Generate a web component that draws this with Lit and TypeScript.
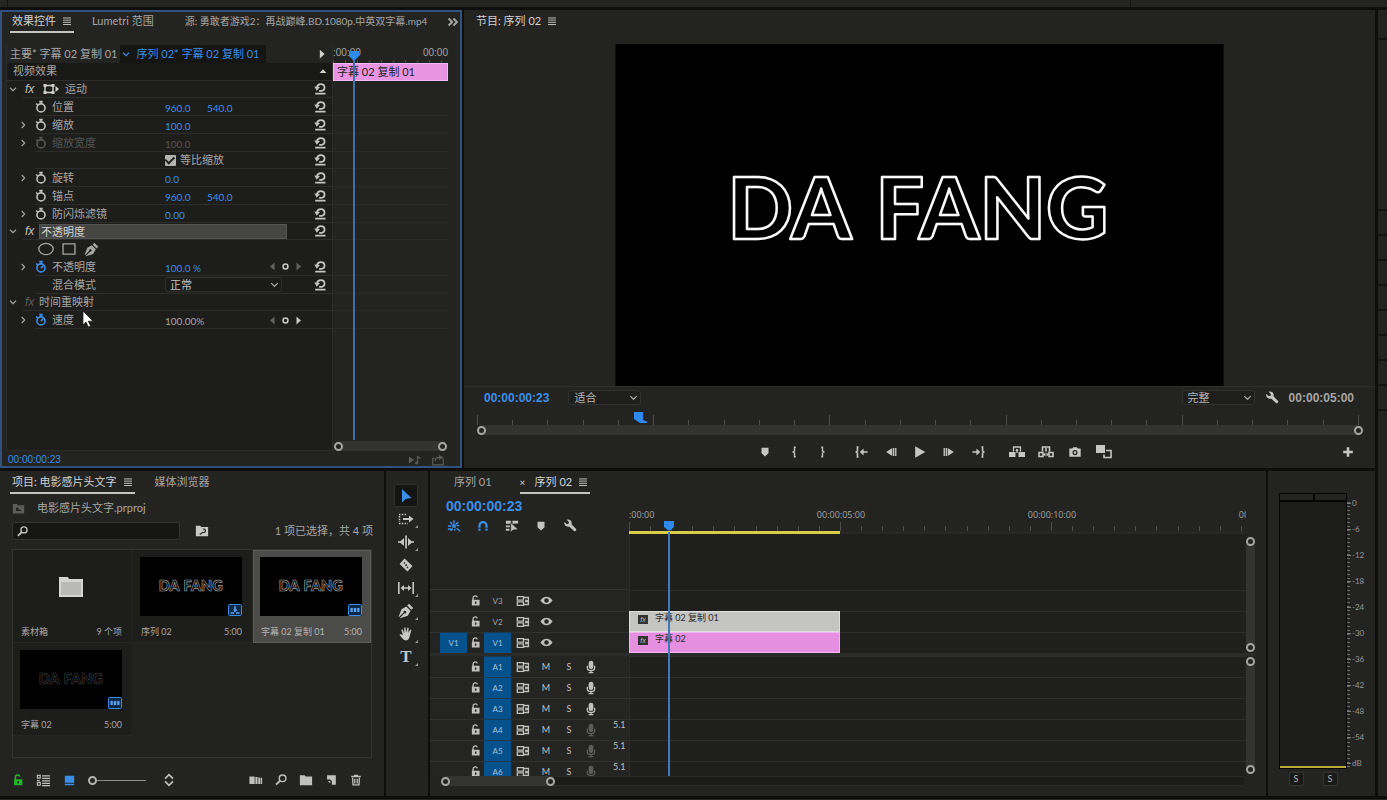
import { LitElement, html, svg, css, nothing } from "lit";
import { customElement, property } from "lit/decorators.js";
import { classMap } from "lit/directives/class-map.js";
import { styleMap } from "lit/directives/style-map.js";

const ICONS: Record<string, unknown> = {
  menu: svg`<path d="M3.500 4.500h9M3.500 7h9M3.500 9.500h9M3.500 12h9" fill="none" stroke="currentColor"/>`,
  more: svg`<path d="M3 4l4 4-4 4M8.500 4l4 4-4 4" fill="none" stroke="currentColor" stroke-width="2.200"/>`,
  down: svg`<path d="M4 6.300L8 10.200l4-3.900" fill="none" stroke="currentColor" stroke-width="1.500"/>`,
  right: svg`<path d="M6.300 4L10.200 8l-3.900 4" fill="none" stroke="currentColor" stroke-width="1.500"/>`,
  triRight: svg`<path d="M5.500 3v10l5.500-5z"/>`,
  triLeft: svg`<path d="M10.500 3v10L5 8z"/>`,
  triUp: svg`<path d="M3.500 10.500h9L8 5.500z"/>`,
  diamond: svg`<circle cx="8" cy="8" r="3" fill="none" stroke="currentColor" stroke-width="1.900"/>`,
  motion: svg`<path d="M2 4.500h8v7H2z" fill="none" stroke="currentColor" stroke-width="1.400"/><path d="M.5 3h3v3h-3zM8.500 3h3v3h-3zM.5 10h3v3h-3zM8.500 10h3v3h-3zM12.500 5v6L16 8z"/>`,
  watch: svg`<path d="M6 1.800h4M8 2v2.500M2.500 4l2 2" fill="none" stroke="currentColor" stroke-width="1.900"/><circle cx="8" cy="9" r="4.600" fill="none" stroke="currentColor" stroke-width="1.900"/>`,
  watchOn: svg`<path d="M6 1.800h4M8 2v2.500M2.500 4l2 2M8 9.300l2.500-2.800" fill="none" stroke="currentColor" stroke-width="1.900"/><circle cx="8" cy="9" r="4.600" fill="none" stroke="currentColor" stroke-width="1.900"/>`,
  reset: svg`<path d="M4.500 6C5 3.300 6.500 2.300 8.800 2.300c2.500 0 4.400 1.700 4.400 4.100 0 2.100-1.500 3.700-3.400 3.700H7M2.500 13.300h11.800" fill="none" stroke="currentColor" stroke-width="2"/><path d="M1.500 5.200l6.500.5-3.700 4.300z"/>`,
  ellipse: svg`<ellipse cx="8" cy="8" rx="7.200" ry="5.600" fill="none" stroke="currentColor" stroke-width="1.300"/>`,
  rect: svg`<path d="M1.200 2.200h13.600v11.600H1.200z" fill="none" stroke="currentColor" stroke-width="1.500"/>`,
  pen: svg`<path d="M11 .8l4.200 4.200-1.800 1.800-4.200-4.200zM8.300 3.400l4.300 4.300-2.800 5L2.300 15.300l-.4-.4 4.600-4.600a1.300 1.300 0 10-.9-.9L1 14l-.3-.4L3.500 6.200z"/>`,
  playNote: svg`<path d="M1 4v8l6-4z"/><path d="M11 3v8M11 3.500l3 3" fill="none" stroke="currentColor" stroke-width="1.300"/><circle cx="9.800" cy="11.500" r="1.700"/>`,
  exportIt: svg`<path d="M5 6H2v7.500h12V6M5 9.500C5 6 7 5 9.500 5" fill="none" stroke="currentColor" stroke-width="1.400"/><path d="M9 2l5 3-5 3z"/>`,
  wrench: svg`<path d="M1.600 3.500l2.900 2.500 1.900-.5.400-2L4.200.9C6.600 0 9.200 1.200 9.800 3.500c.2 1 .1 1.700-.1 2.400l5.200 5.400c1.100 1.200-1 3.500-2.300 2.400L7 8.500C4.300 9.500.5 7 1.600 3.500z"/>`,
  marker: svg`<path d="M4 3h8v6.500L8 13 4 9.500z"/>`,
  braceL: svg`<path d="M10 2.500H8.600v4.300L7 8l1.600 1.200v4.300H10" fill="none" stroke="currentColor" stroke-width="1.600"/>`,
  braceR: svg`<path d="M6 2.500h1.400v4.300L9 8 7.400 9.200v4.300H6" fill="none" stroke="currentColor" stroke-width="1.600"/>`,
  goIn: svg`<path d="M4 2.500H2.800v4.300L1.500 8l1.300 1.200v4.300H4M8 8h6.500" fill="none" stroke="currentColor" stroke-width="1.900"/><path d="M5.500 8L9.800 4v8z"/>`,
  goOut: svg`<path d="M12 2.500h1.200v4.300l1.300 1.200-1.300 1.200v4.300H12M1.500 8H8" fill="none" stroke="currentColor" stroke-width="1.900"/><path d="M10.500 8L6.200 4v8z"/>`,
  stepBack: svg`<path d="M9.500 3.500v9L2.500 8zM10.300 3.500h1.500v9h-1.500zM12.700 3.500h1.500v9h-1.500z"/>`,
  stepFwd: svg`<path d="M6.500 3.500v9l7-4.500zM4.200 3.500h1.500v9H4.200zM1.800 3.500h1.500v9H1.800z"/>`,
  play: svg`<path d="M2.500 1.500v13L14 8z"/>`,
  lift: svg`<path d="M0 8h6.500v5H0zM9.500 8H16v5H9.500z"/><path d="M4.500 7.500V3h7v4.500M8 5v4" fill="none" stroke="currentColor" stroke-width="1.300"/><path d="M6.300 7h3.400L8 4.500z"/>`,
  extract: svg`<path d="M1 8.500h4v4H1zM11 8.500h4v4h-4zM4.500 7.500V3h7v4.500M8 4v3.500" fill="none" stroke="currentColor" stroke-width="1.600"/><path d="M5 10.500L7.500 8.500v4zM11 10.500L8.500 8.500v4z"/>`,
  camera: svg`<path fill-rule="evenodd" d="M1.500 4h3.200L6 2.500h4L11.300 4h3.200v9.500h-13zM8 5.800a2.900 2.900 0 100 5.800 2.900 2.900 0 000-5.800zM8 7.200a1.500 1.500 0 110 3 1.500 1.500 0 010-3z"/>`,
  compare: svg`<path d="M0 1h9v8H0z"/><path d="M10 6.500h5v7H8V10.500" fill="none" stroke="currentColor" stroke-width="1.600"/>`,
  plus: svg`<path d="M6.700 3.200h2.600v3.500h3.500v2.600H9.300v3.500H6.700V9.300H3.200V6.700h3.500z"/>`,
  binUp: svg`<path fill-rule="evenodd" d="M1 2.500h5l1 1.500h8v10H1zM5 7v4h6V9.500H7.500L8.500 7z"/>`,
  search: svg`<circle cx="9.800" cy="6" r="3.800" fill="none" stroke="currentColor" stroke-width="1.600"/><path d="M7.200 8.600L2.300 13.300" stroke="currentColor" stroke-width="2.200"/>`,
  searchBin: svg`<path fill-rule="evenodd" d="M1 2h5l1 1.500h8v10.500H1z"/><path d="M9 6a2 2 0 110 3.500L5.500 12" fill="none" stroke="#232322" stroke-width="1.300"/>`,
  folder: svg`<path d="M1 2.500h5.500l1 1.500H15v10H1z"/>`,
  lock: svg`<path fill-rule="evenodd" d="M3.500 7h9.500v7H3.500zM7.300 9.300h1.800v2.800H7.300z"/><path d="M5 8V5.200c0-3.500 4.500-3.800 5.200-1" fill="none" stroke="currentColor" stroke-width="1.700"/>`,
  list: svg`<path d="M1.500 2.500h3v3h-3zM1.500 10h3v3h-3z" fill="none" stroke="currentColor" stroke-width="1.200"/><path d="M6.500 3H15M6.500 5.700H15M1 8h3M6.500 8.400H15M6.500 11H15M6.500 13.500H15" stroke="currentColor" stroke-width="1.200"/>`,
  thumbs: svg`<path d="M3 3h10v7.500H3zM3 11.500h10v1.500H3z"/>`,
  sort: svg`<path d="M3.500 6.500L8 2l4.500 4.500M3.500 9.500L8 14l4.500-4.500" fill="none" stroke="currentColor" stroke-width="1.900"/>`,
  automate: svg`<path d="M.5 4h6v8.500h-6zM7.300 4.500h2.400v8H7.300zM10.500 5h2v7.500h-2zM13.200 5.500h1.800v7h-1.800z"/>`,
  newItem: svg`<path d="M3.500 2.500h10v11H9V9.500L7 7.500H3.500z"/><path d="M4.500 9h2.700v3z"/>`,
  trash: svg`<path d="M4 5.500l.6 8h6.800l.6-8M2.500 4h11M6.500 4V2.700h3V4M6.600 6.500v5.500M9.400 6.500v5.500" fill="none" stroke="currentColor" stroke-width="1.500"/>`,
  arrow: svg`<path d="M4 1v13.500l3.600-3.500L13.500 10z"/>`,
  trackSel: svg`<path d="M1 3.500h8M1 12.500h9M1.500 5v6" fill="none" stroke="currentColor" stroke-width="1.500" stroke-dasharray="1.500 1.300"/><path d="M5 7h6V4.500L15.500 8 11 11.500V9H5z"/>`,
  ripple: svg`<path d="M7.200 1.500h1.700v13H7.200zM6 4v8L1.500 8zM10 4v8L14.500 8z"/><path d="M0 7.300h3v1.400H0zM13 7.300h3v1.400h-3z"/>`,
  razor: svg`<path fill-rule="evenodd" d="M6.500 1.500l8 7.500-5 5.500-8-7.500zM5.500 6l1 1 1-1-1-1zM8.500 10.500l1 1 1-1-1-1zM7 8.500l1 .9 1.300-1.400-1-.9z"/>`,
  slip: svg`<path d="M.8 2v12M15.200 2v12M4 8h8" fill="none" stroke="currentColor" stroke-width="1.600"/><path d="M2.500 8L6 5v6zM13.500 8L10 5v6z"/>`,
  hand: svg`<path d="M5 9L3.200 3.700 4.500 3.300 6.300 7 6.200 1.500H7.500L8.200 6.500 9.500 1.600l1.200.3L10.300 7l2-3.500 1.100.6-1.700 6c-.5 2.500-1.400 4.400-3.700 4.400-2.500 0-4-2.800-6.500-5.500.5-1.200 1.900-.9 3.500 0z"/>`,
  nest: svg`<path d="M1 8h4M8 1.500v3.500M11 7.500h3M9 11v2M3.500 3.500L6 6M13 3.500L10 6M4 13.500L6.500 11M11 10.500l4 3.500M1 11.500h4" fill="none" stroke="currentColor" stroke-width="1.700"/><path d="M6 6h4v4H6z"/>`,
  magnet: svg`<path d="M4 13.500V7.500a4 4 0 018 0v6" fill="none" stroke="currentColor" stroke-width="2.500"/><path d="M2.500 10.500h3.200M10.300 10.500h3.200" stroke="#232322"/>`,
  linked: svg`<path d="M1 2h6v3.500H1zM8.500 2H15v3L8.500 5.500zM1 7.500h4.500v2H1zM1 11h4v2.500H1z"/><path d="M6.500 4v11l2.800-2.500L15 12z" stroke="#232322" stroke-width=".7"/>`,
  sync: svg`<path d="M1.500 3h7v4h-7zM1.500 9h7v4h-7zM8.500 4h5.700v8H8.500" fill="none" stroke="currentColor" stroke-width="1.500"/><path d="M10.500 6.200l4 .8v2l-4 .8z"/>`,
  eye: svg`<path fill-rule="evenodd" d="M.5 8C3 4.300 5.500 3.400 8 3.400S13 4.300 15.500 8c-2.500 3.700-5 4.600-7.500 4.600S3 11.700.5 8zm7.500-2.800a2.800 2.800 0 100 5.600 2.800 2.800 0 000-5.600z"/>`,
  mic: svg`<rect x="5.300" y=".8" width="5.400" height="9.500" rx="2.700"/><path d="M3.800 6.500V9c0 1.600 1.600 3 4.200 3s4.200-1.400 4.200-3V6.500M8 12v2.500M5.300 14.500h5.400" fill="none" stroke="currentColor" stroke-width="1.500"/>`,
};

const base = css`
  * { box-sizing: border-box; }
  :host {
    display: block;
    min-width: 0;
    min-height: 0;
    color: #a6a6a4;
    font-family: Lato, "Noto Sans CJK SC", sans-serif;
    font-size: 11px;
    line-height: 16px;
    white-space: nowrap;
  }
  button, input, select { font: inherit; color: inherit; border: 0; margin: 0; padding: 0; background: none; border-radius: 0; }
  button { display: inline-flex; align-items: center; justify-content: center; }
  .panel { display: flex; flex-direction: column; height: 100%; background: #232322; overflow: hidden; }
  .tabs { display: flex; flex: none; height: 23px; padding-left: 10px; }
  .tab { display: flex; align-items: center; justify-content: flex-start; gap: 4px; height: 23px; padding: 0 0 0 2px; border-bottom: 2px solid transparent; }
  .tab.on { color: #d2d2d0; border-color: #c4c4c2; }
  .tab.on.plain { border-color: transparent; }
  .ring { width: 9px; height: 9px; border: 2px solid #a6a6a4; border-radius: 50%; background: #232322; flex: none; }
  .zoombar { display: flex; justify-content: space-between; align-items: center; height: 10px; background: #333332; border-radius: 5px; }
  .blue { color: #3b8ee6; }
`;

@customElement("pr-icon")
class PrIcon extends LitElement {
  @property() name = "menu";
  @property({ type: Number }) size = 14;
  static styles = css`
    :host { display: inline-flex; flex: none; }
    svg { display: block; fill: currentColor; }
  `;
  render() {
    return html`<svg width=${this.size} height=${this.size} viewBox="0 0 16 16" aria-hidden="true">${ICONS[this.name]}</svg>`;
  }
}

@customElement("title-frame")
class TitleFrame extends LitElement {
  @property({ type: Number }) stroke = 2.5;
  @property() ink = "#fafafa";
  static styles = css`
    :host { display: block; min-height: 0; }
    svg { display: block; width: 100%; height: 100%; }
    text { font-family: Lato, sans-serif; font-weight: 900; font-size: 86px; fill: #000; stroke-linejoin: round; }
  `;
  render() {
    return html`<svg viewBox="0 0 608 342" role="img" aria-label="DA FANG">
      <rect width="608" height="342" fill="#000"></rect>
      <text y="195" stroke=${this.ink} stroke-width=${this.stroke}><tspan x="112">DA</tspan><tspan x="260">FANG</tspan></text>
    </svg>`;
  }
}

interface EffectRow {
  level: number;
  label?: string;
  caret?: "down" | "right";
  fx?: "on" | "off";
  motion?: boolean;
  watch?: "on" | "off" | "dim";
  values?: string[];
  plain?: boolean;
  kind?: "check" | "shapes" | "mode";
  keys?: "none" | "next";
  reset?: boolean;
  selected?: boolean;
}

const EFFECTS: EffectRow[] = [
  { level: 0, label: "运动", caret: "down", fx: "on", motion: true, reset: true },
  { level: 1, label: "位置", watch: "off", values: ["960.0", "540.0"], reset: true },
  { level: 1, label: "缩放", caret: "right", watch: "off", values: ["100.0"], reset: true },
  { level: 1, label: "缩放宽度", caret: "right", watch: "dim", values: ["100.0"], reset: true },
  { level: 1, kind: "check", reset: true },
  { level: 1, label: "旋转", caret: "right", watch: "off", values: ["0.0"], reset: true },
  { level: 1, label: "锚点", watch: "off", values: ["960.0", "540.0"], reset: true },
  { level: 1, label: "防闪烁滤镜", caret: "right", watch: "off", values: ["0.00"], reset: true },
  { level: 0, label: "不透明度", caret: "down", fx: "on", reset: true, selected: true },
  { level: 1, kind: "shapes" },
  { level: 1, label: "不透明度", caret: "right", watch: "on", values: ["100.0 %"], keys: "none", reset: true },
  { level: 1, label: "混合模式", kind: "mode", reset: true },
  { level: 0, label: "时间重映射", caret: "down", fx: "off" },
  { level: 1, label: "速度", caret: "right", watch: "on", values: ["100.00%"], plain: true, keys: "next" },
];

@customElement("effect-controls")
class EffectControls extends LitElement {
  static styles = [base, css`
    .panel { outline: 2px solid #31527d; outline-offset: -2px; }
    .tabs { gap: 16px; padding-right: 2px; margin-bottom: 12px; }
    .source { flex: 1; min-width: 0; margin-left: 13px; font-size: 10px; }
    .source span { overflow: hidden; }
    .body { flex: 1; min-height: 0; display: grid; grid-template-columns: minmax(0, 1fr) 115px; padding: 0 14px 0 6px; }
    .rows { display: grid; grid-template-rows: repeat(16, 1fr); height: 284px; }
    .tree { background: #1d1d1c; border: 1px solid #2c2c2b; border-top: 0; }
    .source-row { display: flex; align-items: center; padding-left: 3px; background: #232322; }
    .source-row .clip { display: flex; align-items: center; align-self: stretch; background: #151514; padding-right: 6px; margin-left: 3px; gap: 4px; }
    .source-row .end, .heading .end { margin-left: auto; padding-right: 3px; display: flex; color: #cfcfcd; }
    .heading { display: flex; align-items: center; padding-left: 6px; background: #181817; border-bottom: 1px solid #2c2c2b; }
    .row { display: grid; grid-template-columns: 158px minmax(0, 1fr) 24px; align-items: center; }
    .line0 { background: linear-gradient(#2c2c2b, #2c2c2b) 16px 100% / 100% 1px no-repeat; }
    .line1 { background: linear-gradient(#2c2c2b, #2c2c2b) 28px 100% / 100% 1px no-repeat; }
    .line { background: linear-gradient(#2a2a29, #2a2a29) 0 100% / 100% 1px no-repeat; }
    .name { display: flex; align-items: center; height: 16px; }
    .caret { width: 12px; }
    .level1 .caret { margin-left: 10px; }
    .fx { width: 20px; padding-left: 6px; font: italic 12px/14px "Liberation Sans", sans-serif; color: #c0c0be; }
    .fx.off { color: #5c5c5a; }
    .watch { width: 23px; color: #bcbcba; }
    .watch.on { color: #3b8ee6; }
    .watch.dim, .dimmed { color: #545452; }
    .motion { width: 26px; justify-content: flex-start; padding-left: 4px; color: #d0d0ce; }
    .selected { grid-column: 1 / 3; }
    .selected .hl { flex: 1; margin-right: 21px; height: 15px; line-height: 15px; padding-left: 2px; background: #454544; color: #d4d4d2; outline: 1px solid #555554; outline-offset: -1px; }
    .cell { display: flex; align-items: center; height: 16px; }
    .val { width: 42px; height: 16px; padding-top: 2px; font-size: 10px; }
    .val.pct { width: 60px; }
    .keys { display: flex; margin-left: auto; margin-right: 3px; color: #60605e; }
    .keys button:nth-child(2), .keys .live { color: #c8c8c6; }
    .keys button { width: 13px; }
    .reset { color: #c4c4c2; justify-self: center; }
    .check { display: flex; align-items: center; gap: 4px; }
    .check input { appearance: none; width: 11px; height: 11px; background: #b4b4b2; border-radius: 1px; display: grid; place-items: center; }
    .check input:checked::after { content: ""; width: 7px; height: 4px; border: solid #222; border-width: 0 0 2px 2px; transform: rotate(-45deg) translate(0, -1px); }
    .shapes { display: flex; gap: 8px; padding-left: 31px; }
    .mode { display: grid; width: 117px; align-items: center; }
    .mode select { grid-area: 1 / 1; appearance: none; height: 15px; padding-left: 4px; background: #1a1a19; border: 1px solid #30302f; border-radius: 3px; color: #c4c4c2; line-height: 13px; }
    .mode pr-icon { grid-area: 1 / 1; justify-self: end; padding-right: 1px; pointer-events: none; }
    .graph { display: flex; flex-direction: column; position: relative; }
    .ruler { display: flex; flex-direction: column; justify-content: space-between; font: 10px/15px "Liberation Sans", sans-serif; }
    .ruler .t { display: flex; justify-content: space-between; }
    .ticks { display: flex; height: 3px; gap: 11px; }
    .ticks i { width: 1px; flex: none; background: #4a4a48; }
    .bar { background: #e794e2; border: 1px solid #f7b8f3; color: #222; padding-left: 3px; line-height: 15px; }
    .graph .zoombar { margin: auto 1px 0; }
    .playhead { position: absolute; left: 15px; top: 5px; bottom: 11px; width: 13px; overflow: hidden; pointer-events: none; }
    .playhead svg { display: block; }
    .playhead i { display: block; width: 2px; height: 100%; margin: -2px 0 0 5px; background: #3f6fa8; }
    .foot { display: flex; align-items: center; height: 17px; padding: 0 17px 0 8px; font: 10px/14px "Liberation Sans", sans-serif; }
    .foot .tools { display: flex; gap: 9px; margin-left: auto; color: #5c5c5a; }
    .pointer { position: absolute; left: 82px; top: 310px; pointer-events: none; }
  `];

  private name(r: EffectRow) {
    return html`
      ${r.caret ? html`<button class="caret" aria-label="展开"><pr-icon name=${r.caret} size="12"></pr-icon></button>` : html`<span class="caret"></span>`}
      ${r.fx ? html`<span class="fx ${r.fx}">fx</span>` : nothing}
      ${r.motion ? html`<button class="motion" aria-label="运动"><pr-icon name="motion" size="16"></pr-icon></button>` : nothing}
      ${r.level && r.label ? html`<button class="watch ${r.watch ?? ""}" aria-label="切换动画">${r.watch ? html`<pr-icon name=${r.watch === "on" ? "watchOn" : "watch"} size="14"></pr-icon>` : nothing}</button>` : nothing}
      <span class=${classMap({ hl: !!r.selected, dimmed: r.watch === "dim" })}>${r.label}</span>`;
  }

  private cell(r: EffectRow) {
    if (r.kind === "check") return html`<label class="check"><input type="checkbox" checked />等比缩放</label>`;
    if (r.kind === "mode")
      return html`<span class="mode"><select aria-label="混合模式"><option>正常</option></select><pr-icon name="down" size="13"></pr-icon></span>`;
    return html`${r.values?.map((v) => html`<input class="val ${r.watch === "dim" ? "dimmed" : r.plain ? "" : "blue"} ${v.includes("%") ? "pct" : ""}" aria-label=${r.label ?? ""} .value=${v} />`)}
      ${r.keys ? html`<span class="keys">
        <button aria-label="上一关键帧"><pr-icon name="triLeft" size="13"></pr-icon></button>
        <button aria-label="添加关键帧"><pr-icon name="diamond" size="13"></pr-icon></button>
        <button class=${r.keys === "next" ? "live" : ""} aria-label="下一关键帧"><pr-icon name="triRight" size="13"></pr-icon></button></span>` : nothing}`;
  }

  render() {
    return html`<section class="panel">
      <div class="tabs">
        <button class="tab on">效果控件 <pr-icon name="menu" size="14"></pr-icon></button>
        <button class="tab">Lumetri 范围</button>
        <button class="tab source"><span>源: 勇敢者游戏2：再战巅峰.BD.1080p.中英双字幕.mp4</span></button>
        <button aria-label="更多"><pr-icon name="more" size="14"></pr-icon></button>
      </div>
      <div class="body">
        <div class="tree"><div class="rows">
          <div class="source-row">主要* 字幕 02 复制 01
            <span class="clip blue"><pr-icon name="down" size="12"></pr-icon>序列 02* 字幕 02 复制 01</span>
            <span class="end"><pr-icon name="triRight" size="14"></pr-icon></span></div>
          <div class="heading">视频效果<span class="end"><pr-icon name="triUp" size="12"></pr-icon></span></div>
          ${EFFECTS.map((r) => html`<div class="row level${r.level} ${r.kind === "shapes" ? "" : "line" + r.level}">
            ${r.kind === "shapes"
              ? html`<div class="shapes"><button aria-label="椭圆蒙版"><pr-icon name="ellipse" size="16"></pr-icon></button><button aria-label="矩形蒙版"><pr-icon name="rect" size="14"></pr-icon></button><button aria-label="钢笔"><pr-icon name="pen" size="15"></pr-icon></button></div>`
              : html`<div class="name ${r.selected ? "selected" : ""}">${this.name(r)}</div>
                ${r.selected ? nothing : html`<div class="cell">${this.cell(r)}</div>`}
                ${r.reset ? html`<button class="reset" aria-label="重置"><pr-icon name="reset" size="14"></pr-icon></button>` : nothing}`}
          </div>`)}
        </div></div>
        <div class="graph">
          <div class="rows">
            <div class="ruler"><div class="t"><span>:00:00</span><span>00:00</span></div><div class="ticks">${Array.from({ length: 10 }, () => html`<i></i>`)}</div></div>
            <div class="bar">字幕 02 复制 01</div>
            ${EFFECTS.map((r, i) => html`<div class=${i === 0 || r.kind === "shapes" ? "" : "line"}></div>`)}
          </div>
          <div class="zoombar"><span class="ring"></span><span class="ring"></span></div>
          <div class="playhead"><svg width="12" height="12" viewBox="0 0 12 12" fill="#2f8af0"><path d="M1 1h10v5L6 11 1 6z"/></svg><i></i></div>
        </div>
      </div>
      <div class="foot"><span class="blue">00:00:00:23</span><span class="tools"><pr-icon name="playNote" size="14"></pr-icon><pr-icon name="exportIt" size="14"></pr-icon></span></div>
      <svg class="pointer" width="12" height="18" viewBox="0 0 12 18"><path d="M1 1v14l3-3 2.300 5 2.200-1-2.200-4.800H11z" fill="#fff" stroke="#111" stroke-width=".7"/></svg>
    </section>`;
  }
}

@customElement("program-monitor")
class ProgramMonitor extends LitElement {
  static styles = [base, css`
    .stage { flex: 1; min-height: 0; padding-top: 11px; }
    title-frame { height: 100%; }
    .info { display: flex; align-items: center; height: 22px; padding: 0 21px 0 20px; border-top: 1px solid #2e2e2d; }
    .code { font: bold 12px/16px "Liberation Sans", sans-serif; }
    .pick { display: grid; align-items: center; width: 73px; }
    .pick select { grid-area: 1 / 1; appearance: none; height: 15px; padding-left: 5px; background: #1e1e1d; border: 1px solid #323231; border-radius: 3px; color: #b8b8b6; line-height: 13px; }
    .pick pr-icon { grid-area: 1 / 1; justify-self: end; padding-right: 1px; pointer-events: none; }
    .fit { margin-left: 19px; }
    .quality { margin-left: auto; }
    .wrench { margin: 0 10px; color: #c8c8c6; }
    .ruler { position: relative; display: flex; justify-content: space-between; align-items: flex-end; height: 17px; margin: 0 16px 0 13px; }
    .ruler i { width: 1px; height: 5px; background: #4c4c4a; }
    .ruler i.major { height: 10px; }
    .mark { position: absolute; bottom: 1px; }
    .scroll { margin: 0 12px 0 13px; }
    .transport { display: grid; grid-template-columns: 1fr auto 1fr; align-items: center; height: 33px; padding: 0 19px 0 29px; }
    .groups { display: flex; gap: 10px; grid-column: 2; margin-left: 19px; color: #c6c6c4; }
    .groups button { width: 29px; height: 20px; }
    .group { display: flex; }
    .add { justify-self: end; color: #c6c6c4; }
  `];
  render() {
    const groups = [["marker", "braceL", "braceR"], ["goIn", "stepBack", "play", "stepFwd", "goOut"], ["lift", "extract", "camera", "compare"]];
    return html`<section class="panel">
      <div class="tabs"><button class="tab on plain">节目: 序列 02 <pr-icon name="menu" size="14"></pr-icon></button></div>
      <div class="stage"><title-frame></title-frame></div>
      <div class="info">
        <span class="code blue">00:00:00:23</span>
        <span class="pick fit"><select aria-label="缩放级别"><option>适合</option></select><pr-icon name="down" size="13"></pr-icon></span>
        <span class="pick quality"><select aria-label="回放分辨率"><option>完整</option></select><pr-icon name="down" size="13"></pr-icon></span>
        <button class="wrench" aria-label="设置"><pr-icon name="wrench" size="14"></pr-icon></button>
        <span class="code">00:00:05:00</span>
      </div>
      <div class="ruler">
        ${Array.from({ length: 26 }, (_, i) => html`<i class=${i % 5 ? "" : "major"}></i>`)}
        <svg class="mark" style=${styleMap({ left: "17.7%" })} width="14" height="12" viewBox="0 0 14 12" fill="#2f8af0"><path d="M1 0h9v8l4 1.500V11H7L1 7z"/></svg>
      </div>
      <div class="zoombar scroll"><span class="ring"></span><span class="ring"></span></div>
      <div class="transport">
        <div class="groups">${groups.map((g) => html`<div class="group">${g.map((n) => html`<button aria-label=${n}><pr-icon name=${n} size=${n === "lift" || n === "extract" || n === "compare" ? 16 : 14}></pr-icon></button>`)}</div>`)}</div>
        <button class="add" aria-label="按钮编辑器"><pr-icon name="plus" size="16"></pr-icon></button>
      </div>
    </section>`;
  }
}

@customElement("project-panel")
class ProjectPanel extends LitElement {
  static styles = [base, css`
    .tabs { gap: 18px; }
    .path { display: flex; align-items: center; gap: 12px; height: 28px; padding-left: 12px; }
    .path pr-icon { color: #5c5c5a; }
    .find { display: flex; align-items: center; height: 18px; padding: 0 11px 0 12px; }
    .box { display: flex; align-items: center; flex: 0 1 168px; height: 18px; padding-left: 3px; background: #161615; border: 1px solid #333332; border-radius: 3px; color: #c0c0be; }
    .box input { flex: 1; min-width: 0; height: 16px; outline: 0; }
    .bin { margin-left: 15px; color: #c8c8c6; }
    .count { margin-left: auto; }
    .items { flex: 1; min-height: 0; display: grid; grid-template-columns: repeat(3, minmax(0, 1fr)); grid-auto-rows: 93px; column-gap: 2px; margin: 9px 12px 0 12px; border: 1px solid #333332; overflow: hidden; background: #21211f; }
    .item { padding: 7px 9px 0 7px; background: #1d1d1c; border-bottom: 1px solid #252524; font-size: 9px; }
    .item.sel { background: #4b4b4a; color: #b4b4b2; outline: 1px solid #5b5b5a; outline-offset: -1px; }
    .shot { position: relative; height: 59px; display: flex; align-items: center; justify-content: center; }
    .shot title-frame { width: 100%; height: 100%; background: #000; }
    .badge { position: absolute; right: 0; bottom: 0; }
    .cap { display: flex; justify-content: space-between; padding: 8px 0 0 1px; }
    .bottom { display: flex; align-items: center; height: 38px; padding: 6px 21px 0 11px; color: #c0c0be; }
    .left, .right { display: flex; align-items: center; gap: 11px; }
    .right { margin-left: auto; }
    .green { color: #23b52a; }
    .size { appearance: none; width: 58px; height: 12px; margin-right: 5px; background: linear-gradient(#8c8c8a, #8c8c8a) 0 50% / 100% 1px no-repeat; }
    .size::-webkit-slider-thumb { appearance: none; width: 9px; height: 9px; border: 2px solid #b4b4b2; border-radius: 50%; background: #232322; }
  `];
  private badge(seq: boolean) {
    return html`<svg class="badge" width="14" height="12" viewBox="0 0 14 12"><rect x=".5" y=".5" width="13" height="11" rx="1" fill="#0d2747" stroke="#3b8ee6"/>${seq
      ? svg`<path d="M2.500 9h3.500M8 9h3.500M5.500 6h3.500M7 2v3.500M7 6v2" fill="none" stroke="#58a6f7" stroke-width="1.500"/>`
      : svg`<path d="M2.500 4h2.300v4H2.500zM5.900 4h2.300v4H5.900zM9.200 4h2.300v4H9.200z" fill="#58a6f7"/>`}</svg>`;
  }
  render() {
    return html`<section class="panel">
      <div class="tabs"><button class="tab on">项目: 电影感片头文字 <pr-icon name="menu" size="14"></pr-icon></button><button class="tab">媒体浏览器</button></div>
      <div class="path"><pr-icon name="binUp" size="13"></pr-icon>电影感片头文字.prproj</div>
      <div class="find">
        <label class="box"><pr-icon name="search" size="13"></pr-icon><input type="text" aria-label="搜索" /></label>
        <button class="bin" aria-label="从查询创建新的搜索素材箱"><pr-icon name="searchBin" size="14"></pr-icon></button>
        <span class="count">1 项已选择，共 4 项</span>
      </div>
      <div class="items">
        <div class="item"><div class="shot"><svg width="26" height="20" viewBox="0 0 26 20"><path d="M1 0h9l1 2h14v18H1z" fill="#d4d4d2"/><path d="M3 5h20v13H3z" fill="#b9b9b7"/></svg></div><div class="cap"><span>素材箱</span><span>9 个项</span></div></div>
        <div class="item"><div class="shot"><title-frame stroke="4" ink="#a8a8a8"></title-frame>${this.badge(true)}</div><div class="cap"><span>序列 02</span><span>5:00</span></div></div>
        <div class="item sel"><div class="shot"><title-frame stroke="4" ink="#a8a8a8"></title-frame>${this.badge(false)}</div><div class="cap"><span>字幕 02 复制 01</span><span>5:00</span></div></div>
        <div class="item"><div class="shot"><title-frame stroke="4" ink="#3c3c3c"></title-frame>${this.badge(false)}</div><div class="cap"><span>字幕 02</span><span>5:00</span></div></div>
      </div>
      <div class="bottom">
        <div class="left">
          <button class="green" aria-label="项目可写"><pr-icon name="lock" size="14"></pr-icon></button>
          <button aria-label="列表视图"><pr-icon name="list" size="15"></pr-icon></button>
          <button class="blue" aria-label="图标视图"><pr-icon name="thumbs" size="15"></pr-icon></button>
          <input class="size" type="range" value="0" aria-label="调整图标大小" />
          <button aria-label="排序图标"><pr-icon name="sort" size="14"></pr-icon></button>
        </div>
        <div class="right">${["automate", "search", "folder", "newItem", "trash"].map((n) => html`<button aria-label=${n}><pr-icon name=${n} size="14"></pr-icon></button>`)}</div>
      </div>
    </section>`;
  }
}

@customElement("tool-bar")
class ToolBar extends LitElement {
  static styles = [base, css`
    .panel { align-items: center; padding-top: 13px; }
    button { position: relative; flex: none; width: 24px; height: 23px; margin-right: 2px; border-radius: 2px; color: #c6c6c4; }
    button.on { background: #141413; outline: 1px solid #30302f; outline-offset: -1px; color: #3b8ee6; }
    .sub::after { content: ""; position: absolute; right: 0; bottom: 2px; border: solid transparent; border-width: 0 0 3px 3px; border-bottom-color: #9a9a98; }
    .type { font: bold 17px/20px "Liberation Serif", serif; }
  `];
  render() {
    const tools: [string, boolean][] = [["arrow", false], ["trackSel", true], ["ripple", true], ["razor", false], ["slip", true], ["pen", true], ["hand", true]];
    return html`<nav class="panel">${tools.map(([n, sub], i) => html`<button class=${classMap({ on: i === 0, sub })} aria-label=${n}><pr-icon name=${n} size="16"></pr-icon></button>`)}
      <button class="type sub">T</button></nav>`;
  }
}

@customElement("timeline-panel")
class TimelinePanel extends LitElement {
  static styles = [base, css`
    .tabs { gap: 28px; padding-left: 22px; }
    .tab .x { width: 11px; font-size: 10px; text-align: left; }
    .tab.on { padding-left: 0; }
    .grid { position: relative; flex: 1; min-height: 0; display: grid; grid-template-columns: 199px minmax(0, 1fr) 9px; grid-template-rows: 40px minmax(0, 119fr) 3px minmax(0, 120fr) 10px; padding: 0 11px 10px 0; }
    .top { grid-row: 1; }
    .vid { grid-row: 2; }
    .aud { grid-row: 4; }
    .c1 { grid-column: 1; }
    .c2 { grid-column: 2; }
    .c3 { grid-column: 3; }
    .code { padding-left: 16px; font: bold 14px/24px "Liberation Sans", sans-serif; }
    .opts { display: flex; gap: 13px; height: 16px; padding-left: 16px; color: #c4c4c2; }
    .opts button { width: 16px; height: 16px; }
    .opts .blue { color: #3b8ee6; }
    .ruler { display: flex; align-items: flex-end; overflow: hidden; }
    .seg { flex: none; width: 34.2%; height: 26px; display: flex; flex-direction: column; justify-content: space-between; border-bottom: 3px solid #262625; }
    .seg.work { border-color: #d8cd4a; }
    .seg b { align-self: flex-start; width: 50px; margin-left: -24px; text-align: center; font: 9px/14px "Open Sans", sans-serif; }
    .seg.work b { margin-left: 0; text-align: left; }
    .marks { display: flex; align-items: flex-end; }
    .marks i { flex: 1; height: 5px; border-left: 1px solid #4c4c4a; }
    .marks i:first-child { height: 9px; }
    .heads, .lanes { display: flex; flex-direction: column; overflow: hidden; min-height: 0; }
    .end { justify-content: flex-end; }
    .lanes { background: #1f1f1e; box-shadow: inset 1px 0 #2c2c2b; }
    .head { flex: none; display: grid; grid-template-columns: 27px 17px 27px 24px 22px 24px 20px 1fr; align-items: center; justify-items: center; height: 21px; padding-left: 10px; background: #242423; box-shadow: 0 -1px #31312f; font-size: 9px; line-height: 12px; color: #b4b4b2; }
    .head + .head { box-shadow: inset 0 1px #31312f; }
    .head button, .head span { color: #c0c0be; }
    .head .name { width: 27px; align-self: stretch; color: #a2a2a0; font-size: 8px; }
    .head .patch { align-self: stretch; width: 27px; background: #05518c; color: #a9c3da; font-size: 8px; border-top: 1px solid #1d3a54; }
    .head .dim { color: #5c5c5a; }
    .head .send { align-self: start; justify-self: start; padding-left: 12px; }
    .lane { flex: none; height: 21px; box-shadow: inset 0 1px #2c2c2b; }
    .clip { display: flex; gap: 7px; height: 21px; width: 34.2%; padding: 0 0 0 8px; font-size: 9px; line-height: 11px; color: #2b2b2a; background: #e58fe0; border: 1px solid #f4b6f1; overflow: hidden; }
    .clip.grey { background: #c4c4c3; border-color: #dededd; }
    .clip em { margin-top: 3px; width: 10px; height: 9px; background: #333332; color: #bbb; font: italic 7px/9px "Liberation Sans", sans-serif; text-align: center; flex: none; }
    .split { grid-column: 1 / 4; grid-row: 3; background: #2b2b2a; }
    .vbar { width: 9px; flex-direction: column; height: auto; margin: 3px 0 1px; }
    .vbar.aud { margin-top: 1px; margin-bottom: 2px; }
    .hbar { grid-column: 1 / 3; grid-row: 5; display: flex; background: #1b1b1a; margin-left: 11px; border-radius: 5px; box-shadow: inset 0 0 0 1px #2b2b2a; }
    .hbar .zoombar { width: 114px; }
    .over { grid-column: 2; grid-row: 1 / 5; position: relative; pointer-events: none; overflow: hidden; }
    .playhead { position: absolute; top: 26px; bottom: 0; width: 12px; margin-left: -6px; }
    .playhead svg { display: block; }
    .playhead i { display: block; width: 2px; height: 100%; margin-left: 5px; background: #4179b8; }
  `];
  private head(t: string, audio: boolean) {
    const low = audio && Number(t[1]) > 3;
    const target = audio || t === "V1";
    return html`<div class="head">
      ${t === "V1" ? html`<button class="patch">V1</button>` : html`<span></span>`}
      <button aria-label="切换轨道锁定"><pr-icon name="lock" size="13"></pr-icon></button>
      <button class=${classMap({ name: !target, patch: target })}>${t}</button>
      <button aria-label="切换同步锁定"><pr-icon name="sync" size="14"></pr-icon></button>
      ${audio ? html`<button>M</button><button>S</button><button class=${low ? "dim" : ""} aria-label="画外音录制"><pr-icon name="mic" size="14"></pr-icon></button>` : html`<button aria-label="切换轨道输出"><pr-icon name="eye" size="13"></pr-icon></button>`}
      ${low ? html`<span class="send">5.1</span>` : nothing}
    </div>`;
  }
  private rings() {
    return html`<span class="ring"></span><span class="ring"></span>`;
  }
  render() {
    const opts = ["nest", "magnet", "linked", "marker", "wrench"];
    const audio = ["A1", "A2", "A3", "A4", "A5", "A6"];
    return html`<section class="panel">
      <div class="tabs"><button class="tab">序列 01</button><button class="tab on"><span class="x">×</span>序列 02 <pr-icon name="menu" size="14"></pr-icon></button></div>
      <div class="grid">
        <div class="top c1"><div class="code blue">00:00:00:23</div>
          <div class="opts">${opts.map((n, i) => html`<button class=${i < 2 ? "blue" : ""} aria-label=${n}><pr-icon name=${n} size="14"></pr-icon></button>`)}</div></div>
        <div class="ruler top c2">
          ${[":00:00", "00:00:05:00", "00:00:10:00", "00:00:15:00"].map((t, i) => html`<div class="seg ${i === 0 ? "work" : ""}"><b>${t}</b><div class="marks">${Array.from({ length: 10 }, () => html`<i></i>`)}</div></div>`)}
        </div>
        <div class="heads end vid c1">${["V3", "V2", "V1"].map((t) => this.head(t, false))}</div>
        <div class="lanes end vid c2">
          <div class="lane"></div>
          <div class="lane"><div class="clip grey"><em>fx</em>字幕 02 复制 01</div></div>
          <div class="lane"><div class="clip"><em>fx</em>字幕 02</div></div>
        </div>
        <div class="zoombar vbar vid c3">${this.rings()}</div>
        <div class="split"></div>
        <div class="heads aud c1">${audio.map((t) => this.head(t, true))}</div>
        <div class="lanes aud c2">${audio.map(() => html`<div class="lane"></div>`)}</div>
        <div class="zoombar vbar aud c3">${this.rings()}</div>
        <div class="hbar"><div class="zoombar">${this.rings()}</div></div>
        <div class="over"><div class="playhead" style=${styleMap({ left: "6.5%" })}><svg width="12" height="12" viewBox="0 0 12 12" fill="#2f8af0"><path d="M1 1h10v6L6 11 1 7z"/></svg><i></i></div></div>
      </div>
    </section>`;
  }
}

@customElement("audio-meters")
class AudioMeters extends LitElement {
  static styles = [base, css`
    .panel { display: grid; grid-template-columns: 68px 1fr; grid-template-rows: minmax(0, 1fr) 14px; row-gap: 3px; padding: 22px 0 10px 11px; }
    .meter { display: flex; flex-direction: column; border: 1px solid #050505; background: #1d1d1c; }
    .peaks { display: grid; grid-template-columns: 1fr 1fr; height: 8px; border-bottom: 2px solid #050505; }
    .peaks i { background: #232322; }
    .peaks i + i { border-left: 2px solid #050505; }
    .floor { margin-top: auto; height: 2px; background: #b8a93c; }
    .scale { display: flex; flex-direction: column; justify-content: space-between; padding-top: 5px; font-size: 8px; line-height: 11px; color: #969694; background: repeating-linear-gradient(#6a6a68 0 1px, transparent 1px 4px) 0 9px / 3px 100% no-repeat; }
    .scale span { display: flex; align-items: center; gap: 1px; }
    .scale span::before { content: ""; width: 4px; height: 1px; background: #7c7c7a; }
    .solo { display: flex; justify-content: space-around; }
    .solo button { width: 15px; height: 14px; background: #191918; border: 1px solid #343433; border-radius: 2px; font-size: 9px; color: #b4b4b2; }
  `];
  render() {
    return html`<section class="panel">
      <div class="meter"><div class="peaks"><i></i><i></i></div><div class="floor"></div></div>
      <div class="scale">${["0", "-6", "-12", "-18", "-24", "-30", "-36", "-42", "-48", "-54", "dB"].map((t) => html`<span>${t}</span>`)}</div>
      <div class="solo"><button>S</button><button>S</button></div>
    </section>`;
  }
}

@customElement("app-root")
class AppRoot extends LitElement {
  static styles = css`
    * { box-sizing: border-box; }
    :host { display: grid; grid-template-rows: 7px minmax(0, 458fr) minmax(0, 325fr) 1px; gap: 3px; height: 100vh; background: #0e0e0e; grid-template-columns: minmax(0, 1fr) 9px; overflow: hidden; }
    .strip { grid-column: 1 / 3; background: #242423; display: flex; justify-content: space-between; }
    .strip i { width: 1px; background: #121211; }
    .strip i:first-child { margin-left: 7px; }
    .strip i:last-child { margin-right: 256px; }
    .upper, .lower { display: grid; gap: 2px; grid-column: 1; min-height: 0; }
    .upper { grid-template-columns: minmax(0, 462fr) minmax(0, 911fr); }
    .lower { grid-template-columns: minmax(0, 384fr) 42px minmax(0, 836fr) 107px; }
    .side { grid-area: 2 / 2 / 4 / 3; background: #232322; display: flex; flex-direction: column; padding-top: 28px; }
    .side i { flex: none; height: 25px; border-top: 2px solid #141413; }
    .side i:first-child { height: 171px; }
  `;
  render() {
    return html`
      <div class="strip"><i></i><i></i></div>
      <div class="upper"><effect-controls></effect-controls><program-monitor></program-monitor></div>
      <div class="lower"><project-panel></project-panel><tool-bar></tool-bar><timeline-panel></timeline-panel><audio-meters></audio-meters></div>
      <div class="side">${Array.from({ length: 10 }, () => html`<i></i>`)}</div>
      <div class="strip"></div>`;
  }
}
